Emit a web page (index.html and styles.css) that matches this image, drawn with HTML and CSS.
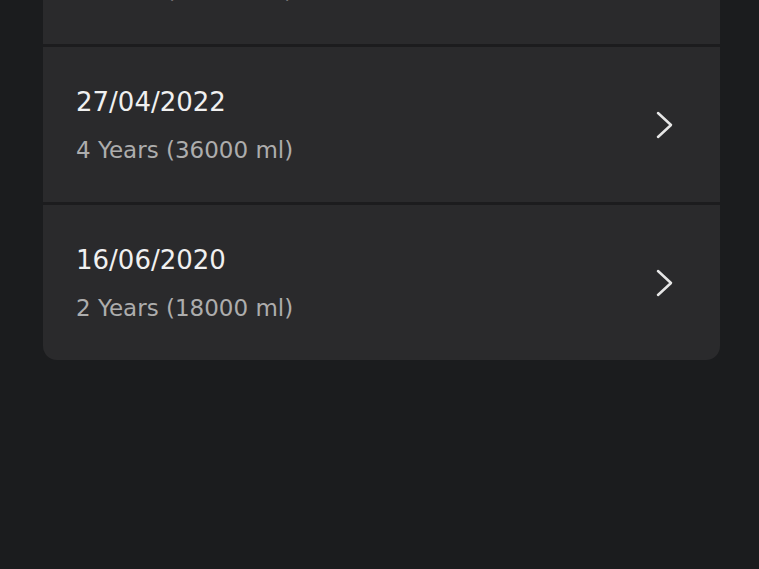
FILE: index.html
```html
<!DOCTYPE html>
<html>
<head>
  <meta charset="UTF-8">
  <title>History</title>
  <link rel="stylesheet" href="styles.css">
</head>
<body>
  <div class="list">
    <div class="row">
      <div class="info">
        <div class="date">11/03/2024</div>
        <div class="sub">6 Years (54000 ml)</div>
      </div>
      <svg class="chev" viewBox="0 0 18 28"><path d="M2 2 L15 14 L2 26"/></svg>
    </div>
    <div class="row">
      <div class="info">
        <div class="date">27/04/2022</div>
        <div class="sub">4 Years (36000 ml)</div>
      </div>
      <svg class="chev" viewBox="0 0 18 28"><path d="M2 2 L15 14 L2 26"/></svg>
    </div>
    <div class="row">
      <div class="info">
        <div class="date">16/06/2020</div>
        <div class="sub">2 Years (18000 ml)</div>
      </div>
      <svg class="chev" viewBox="0 0 18 28"><path d="M2 2 L15 14 L2 26"/></svg>
    </div>
  </div>
</body>
</html>
```

FILE: styles.css
```css
body {
  margin: 0;
  background: #1b1c1e;
  font-family: 'DejaVu Sans', 'Noto Sans', sans-serif;
  color: #f1f1f1;
  min-height: 100vh;
  overflow: hidden;
}
.list {
  margin: -115px 0 0 43px;
  width: 677px;
  background: #2a2a2c;
  border-radius: 0 0 14px 14px;
  overflow: hidden;
}
.row {
  display: flex;
  align-items: center;
  justify-content: space-between;
  height: 155px;
  padding: 0 46px 0 33px;
  border-top: 3px solid #1c1c1e;
}
.row:first-child {
  border-top: none;
  height: 159px;
}
.info {
  padding-top: 2px;
}
.date {
  font-size: 26px;
  color: #f0f0f0;
  line-height: 1;
}
.sub {
  font-size: 23px;
  color: #adadad;
  margin-top: 24px;
  line-height: 1;
}
.chev {
  width: 18px;
  height: 28px;
  fill: none;
  stroke: #e6e6e6;
  stroke-width: 2.5;
  stroke-linecap: round;
  stroke-linejoin: round;
}
```
